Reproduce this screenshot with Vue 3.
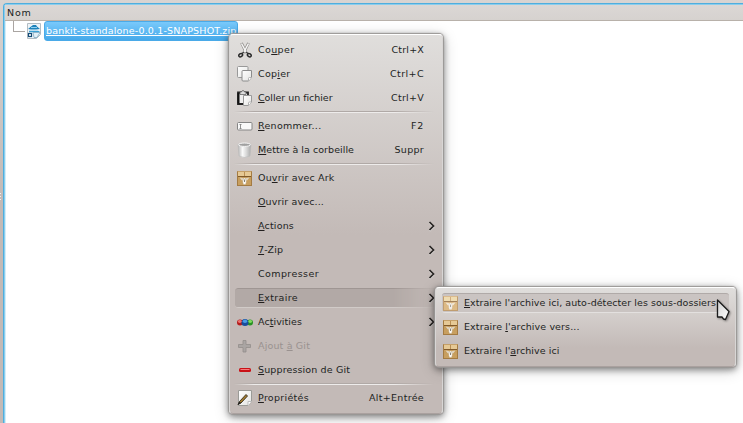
<script setup>
const menu = [
  { icon: 'cut', a: 'Co', k: 'u', b: 'per', w: 36.5, key: 'Ctrl+X', kw: 32.5 },
  { icon: 'copy', a: 'Cop', k: 'i', b: 'er', w: 32.5, key: 'Ctrl+C', kw: 34 },
  { icon: 'paste', a: '', k: 'C', b: 'oller un fichier', w: 74.5, key: 'Ctrl+V', kw: 33 },
  { sep: true },
  { icon: 'rename', a: '', k: 'R', b: 'enommer...', w: 63.5, key: 'F2', kw: 13 },
  { icon: 'trash', a: '', k: 'M', b: 'ettre à la corbeille', w: 96, key: 'Suppr', kw: 29.5 },
  { sep: true },
  { icon: 'ark', a: 'Ou', k: 'v', b: 'rir avec Ark', w: 76.5 },
  { a: '', k: 'O', b: 'uvrir avec...', w: 66 },
  { a: '', k: 'A', b: 'ctions', w: 36, sub: true },
  { a: '', k: '7', b: '-Zip', w: 25, sub: true },
  { a: 'Compresser', k: '', b: '', w: 61, sub: true },
  { a: '', k: 'E', b: 'xtraire', w: 40, sub: true, active: true },
  { icon: 'activities', a: 'Ac', k: 't', b: 'ivities', w: 44, sub: true },
  { icon: 'add', a: 'Ajout ', k: 'à', b: ' Git', w: 52, disabled: true },
  { icon: 'remove', a: '', k: 'S', b: 'uppression de Git', w: 92 },
  { sep: true },
  { icon: 'props', a: '', k: 'P', b: 'ropriétés', w: 51, key: 'Alt+Entrée', kw: 55 }
]
const submenu = [
  { a: '', k: 'E', b: "xtraire l'archive ici, auto-détecter les sous-dossiers", w: 252, active: true },
  { a: 'Extraire ', k: 'l', b: "'archive vers...", w: 115.5 },
  { a: "Extraire l'", k: 'a', b: 'rchive ici', w: 95.5 }
]
// Spreads the letters of a label so that it takes the given width.
const vFit = {
  mounted(el, { value }) {
    const spacing = (value - el.getBoundingClientRect().width) / el.textContent.length
    el.style.letterSpacing = spacing.toFixed(3) + 'px'
  }
}
</script>

<template>
  <main class="window">
    <svg class="defs" width="0" height="0">
      <defs>
        <linearGradient id="paper" x2="1" y2="1"><stop stop-color="#fff" /><stop offset="1" stop-color="#e4e4e2" /></linearGradient>
        <linearGradient id="metal"><stop stop-color="#b5b5b5" /><stop offset=".35" stop-color="#fafafa" /><stop offset=".65" stop-color="#d8d8d8" /><stop offset="1" stop-color="#a8a8a8" /></linearGradient>
        <linearGradient id="box" x2="0" y2="1"><stop stop-color="#c49b5b" /><stop offset="1" stop-color="#c9a060" /></linearGradient>
        <linearGradient id="pointer" x2="1" y2="1"><stop stop-color="#d0d0d0" /><stop offset="1" stop-color="#fff" /></linearGradient>
        <symbol id="ark" viewBox="0 0 16 16">
          <rect x=".5" y="1.500" width="14" height="14" fill="url(#box)" stroke="#a47b42" />
          <path d="M1 2h13v4H1z" fill="#e6c995" />
          <path d="M.5 1.500h14" stroke="#c5a069" />
          <path d="M7.500 2v4" stroke="#b98f54" />
          <path d="M1 6.500h13" stroke="#80592a" />
          <path d="M2.500 7.500 5.500 8 7.500 9 9.500 8l3-.5-2 2.500-1.500 1h-3L4.500 10z" fill="#e0d5c1" />
          <path d="M6.700 8h1.600l1 4-.8 2.500h-2L5.700 12z" fill="#fdfcf9" stroke="#b5a27e" stroke-width=".4" />
          <path d="M7 9.500h1v2.500H7z" fill="#858178" />
        </symbol>
        <symbol id="cut" viewBox="0 0 16 16">
          <path d="M4.500 1 9.300 11M11.500 1 6.700 11" stroke="#8f8c89" stroke-width="2.800" />
          <path d="M4.500 1.500 9.300 10.500M11.500 1.500 6.700 10.500" stroke="#f6f6f6" stroke-width="1.500" />
          <path d="M7 10 5 11.500M9 10 11 11.500" stroke="#444" stroke-width="1.500" />
          <ellipse cx="3.700" cy="13.200" rx="2" ry="1.500" transform="rotate(-35 3.700 13.200)" fill="none" stroke="#2a2a2a" stroke-width="1.500" />
          <ellipse cx="12.300" cy="13.200" rx="2" ry="1.500" transform="rotate(35 12.300 13.200)" fill="none" stroke="#2a2a2a" stroke-width="1.500" />
        </symbol>
        <symbol id="copy" viewBox="0 0 16 16">
          <rect x=".5" y=".5" width="10.500" height="11" rx="1" fill="url(#paper)" stroke="#999" />
          <path d="M6 4.500h8.500v7l-3 3.500H6q-1 0-1-1v-8.500q0-1 1-1z" fill="url(#paper)" stroke="#8c8c8c" />
          <path d="M11.500 15v-2.500q0-1 1-1h2" fill="#fff" stroke="#b0b0b0" />
        </symbol>
        <symbol id="paste" viewBox="0 0 16 16">
          <path d="M1 2.500h10V14H1z" fill="#eee" stroke="#222" stroke-width="1.800" />
          <path d="M3 2h1.500L5.500.5h1L7.500 2H9v2.500H3z" fill="#ddd" stroke="#555" stroke-width=".7" />
          <path d="M1.500 3v10.500" stroke="#111" stroke-width="2" />
          <path d="M6.500 5.500h8v6.500l-3 3.500h-5z" fill="url(#paper)" stroke="#999" />
          <path d="M11.500 15.500V13q0-1 1-1h2" fill="#fff" stroke="#b0b0b0" />
        </symbol>
        <symbol id="rename" viewBox="0 0 16 16">
          <rect x=".5" y="4.500" width="14.500" height="7.500" rx="1" fill="#f9f9f9" stroke="#858585" />
          <path d="M3.500 6.500v4M2.500 6.500h2M2.500 10.500h2" stroke="#777" stroke-width=".8" />
        </symbol>
        <symbol id="trash" viewBox="0 0 16 16">
          <path d="M1 2.500 2 14q5.500 3 11 0L14 2.500z" fill="url(#metal)" stroke="#bbb" stroke-width=".6" />
          <ellipse cx="7.500" cy="2.700" rx="6" ry="1.700" fill="#a0a0a0" stroke="#f6f6f6" />
        </symbol>
        <symbol id="activities" viewBox="0 0 16 16">
          <circle cx="3" cy="8.500" r="3" fill="#b51c1c" /><circle cx="13" cy="8.500" r="3" fill="#289323" />
          <circle cx="8" cy="8.500" r="3.600" fill="#184c9c" />
          <ellipse cx="2.800" cy="7.500" rx="1.900" ry="1.400" fill="#ed7570" /><ellipse cx="8" cy="7.200" rx="2.200" ry="1.700" fill="#4a9de6" /><ellipse cx="13.200" cy="7.500" rx="1.900" ry="1.400" fill="#7edb5e" />
        </symbol>
        <symbol id="add" viewBox="0 0 16 16">
          <path d="M6 2.500h3v4h4.500v3H9v4.500H6V9.500H1.500v-3H6z" fill="#aaa5a3" stroke="#938e8c" stroke-width=".8" />
        </symbol>
        <symbol id="remove" viewBox="0 0 16 16">
          <rect x="2" y="6" width="12" height="4" rx="1.500" fill="#c91116" />
          <path d="M3.500 7.500h9" stroke="#f77b7d" />
        </symbol>
        <symbol id="props" viewBox="0 0 16 16">
          <path d="M1.500.5h13v11l-3.500 4H1.500z" fill="url(#paper)" stroke="#9b9b97" />
          <path d="M11 15.500v-4h3.500" fill="#fff" stroke="#bbb" />
          <path d="M1 14.500 2.500 11.500 9 4.500l1.500 1.500-6.500 7z" fill="#a77e2d" stroke="#30291d" stroke-width=".9" />
          <path d="M.5 15 2.500 11.500 4 13z" fill="#222" />
        </symbol>
      </defs>
    </svg>

    <section class="view">
      <header class="head"><span v-fit="24.5">Nom</span></header>
      <div class="row">
        <span class="branch"></span>
        <svg class="file" width="14" height="16" viewBox="0 0 14 16">
          <path d="M.5.500h13v11l-4 4h-9z" fill="#eef4f8" stroke="#b2bcc3" />
          <path d="M1 6 4 3.500 6 2h3l1 1.500L13 6 9 6.500H4z" fill="#1e83bb" />
          <path d="M4 4.500h6" stroke="#8fd0f0" />
          <path d="M2 8.500h9l1.500.5" fill="none" stroke="#39a0d4" stroke-width="1.300" />
          <path d="M6 9.500h7l-3 5H7z" fill="#e2f0f8" stroke="#7faac2" stroke-width=".8" />
          <rect x="1.500" y="10.500" width="3" height="3" fill="#fff" stroke="#154d77" stroke-width="1.200" />
        </svg>
        <span class="name"><span v-fit="190.5">bankit-standalone-0.0.1-SNAPSHOT.zip</span></span>
      </div>
    </section>
    <div class="grip"><i></i><i></i><i></i></div>

    <nav class="menu main">
      <template v-for="(m, i) in menu" :key="i">
        <div v-if="m.sep" class="sep"></div>
        <div v-else class="item" :class="{ active: m.active, disabled: m.disabled }">
          <svg class="icon" width="16" height="16"><use v-if="m.icon" :href="'#' + m.icon" /></svg>
          <span v-fit="m.w" class="label">{{ m.a }}<u>{{ m.k }}</u>{{ m.b }}</span>
          <span v-if="m.key" v-fit="m.kw" class="key">{{ m.key }}</span>
          <svg v-if="m.sub" class="arrow" width="7" height="10" viewBox="0 0 7 10">
            <path d="M1.500 2 5.500 6 1.500 10" class="glow" /><path d="M1.500 1 5.500 5 1.500 9" />
          </svg>
        </div>
      </template>
    </nav>

    <nav class="menu side">
      <div v-for="(m, i) in submenu" :key="i" class="item" :class="{ active: m.active }">
        <svg class="icon" width="16" height="16"><use href="#ark" /></svg>
        <span v-fit="m.w" class="label">{{ m.a }}<u>{{ m.k }}</u>{{ m.b }}</span>
      </div>
    </nav>

    <svg class="cursor" width="15" height="23" viewBox="0 0 15 23">
      <path d="M1.500 1 13 12.500 9.500 20.500 7.500 20 6 18H1.500z" fill="url(#pointer)" stroke="#1b1b1b" stroke-width="1.300" stroke-linejoin="round" />
    </svg>
  </main>
</template>

<style>
body { margin: 0; overflow: hidden; }
</style>
<style scoped>
.window {
  position: relative;
  box-sizing: border-box;
  width: 743px;
  height: 423px;
  padding: 3px 0 0 3px;
  overflow: hidden;
  background: linear-gradient(#d8d4d2, #d4d0ce 30px, #c4bab6 200px);
  font: 9.5px/24px "DejaVu Sans", sans-serif;
  color: #221f1e;
  white-space: pre;
}
.defs { position: absolute; }
.view {
  box-sizing: border-box;
  height: 424px;
  border: solid #4faede;
  border-width: 1px 0 0 1px;
  border-radius: 4px 0 0 0;
  box-shadow: inset 1px 1px #8bcdec, inset 2px 0 #d3edf9;
  background: #fff;
}
.head {
  height: 15px;
  margin: 1px 0 0 1px;
  padding-left: 2px;
  border-bottom: 1px solid #b8b1aa;
  background: linear-gradient(#dbd7d5, #d6d2cf);
  line-height: 16px;
}
.row { display: flex; height: 20px; align-items: center; }
.branch { width: 11px; height: 10px; margin: -10px 2px 0 9px; border: solid #aaa5a2; border-width: 0 0 1px 1px; }
.file { margin-right: 3px; }
.name {
  box-sizing: border-box;
  width: 194px;
  height: 20px;
  padding-left: 1px;
  border: 1px solid #4aaae8;
  border-radius: 3px;
  background: linear-gradient(#79c9fb, #45a9ea);
  color: #fff;
  line-height: 18px;
  text-decoration: underline;
}
.grip { position: absolute; left: 0; top: 193px; display: grid; gap: 2px; }
.grip i { width: 1px; height: 1px; background: #f3efed; }
.menu {
  position: absolute;
  box-sizing: border-box;
  padding: 3px 4px;
  border: 1px solid #d8d6d5;
  border-top-color: #fff;
  border-bottom-color: #aaa19f;
  border-radius: 4px;
  box-shadow: 0 0 1px 1px #9a9795, 0 2px 6px 1px #0006, 0 3px 16px #0003;
}
.main { left: 229px; top: 34px; width: 214px; height: 380px; background: linear-gradient(#e0dedc, #c3bab7 200px); }
.side { left: 435px; top: 287px; width: 301px; height: 80px; background: linear-gradient(#e0dedc, #c3bab7 60px); }
.item { position: relative; z-index: 0; display: flex; align-items: center; height: 24px; padding: 0 14px 0 3px; }
.icon { flex: none; width: 16px; margin-right: 5px; }
.label u { text-decoration: underline; text-underline-offset: 1px; text-decoration-thickness: 1px; }
.key { margin-left: auto; }
.arrow { margin: 0 -11px 0 auto; fill: none; stroke: #282523; stroke-width: 1.700; overflow: visible; }
.glow { stroke: #eee; opacity: .6; }
.disabled { color: #9a9290; }
.item.active::before {
  content: "";
  position: absolute;
  z-index: -1;
  inset: 2px 0 2px 1px;
  border-top: 1px solid #9f9693;
  border-bottom: 1px solid #d1cbc8;
  border-radius: 3px;
  background: #b2a9a6;
}
.main .active::before { -webkit-mask-image: linear-gradient(90deg, #000 78%, transparent); mask-image: linear-gradient(90deg, #000 78%, transparent); }
.side .active::before { inset: 2px 2px; background: #cac4c2; border-top-color: #b0aaa8; border-bottom-color: #e3e0df; }
.side .active .icon { opacity: .7; filter: brightness(1.15); }
.sep { height: 1px; margin: 1px 4px 1px 0; border-bottom: 1px solid #eeeceb; background: #b0a9a6; -webkit-mask-image: linear-gradient(90deg, transparent, #000 10%, #000 80%, transparent); mask-image: linear-gradient(90deg, transparent, #000 10%, #000 80%, transparent); }
.cursor { position: absolute; left: 716px; top: 299px; filter: drop-shadow(1px 1px 1px #0006); }
</style>
